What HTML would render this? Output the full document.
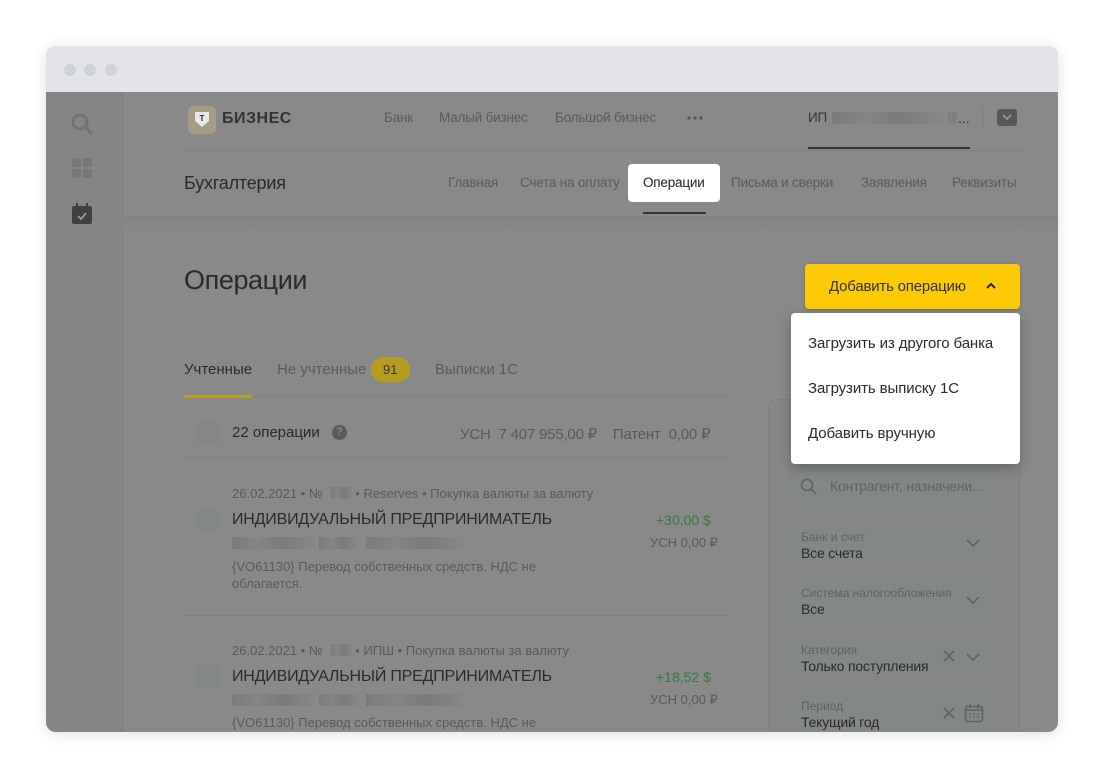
<!DOCTYPE html><html><head><meta charset="utf-8"><style>
*{box-sizing:border-box;margin:0;padding:0}
body{width:1104px;height:779px;background:#fff;font-family:"Liberation Sans",sans-serif;position:relative;overflow:hidden;color:#2e2e2e}
.a{position:absolute;white-space:nowrap}
.win{position:absolute;left:46px;top:46px;width:1012px;height:686px;border-radius:10px;overflow:hidden;box-shadow:0 2px 14px rgba(0,0,0,.12);background:#898989}
.bar{position:absolute;left:0;top:0;width:1012px;height:46px;background:#e2e4e8}
.dot{position:absolute;top:18px;width:12px;height:12px;border-radius:6px;background:#cfd2d8}
.g{color:#5a5a5a}
.n{font-size:13.5px;letter-spacing:-.2px}
.pix{position:absolute;height:12px;background:linear-gradient(90deg,#7b7b7b,#858585 30%,#7a7a7a 60%,#888)}
.fld{position:absolute;left:742px;width:210px;height:45px;border-radius:5px;background:#838787}
.lb{position:absolute;left:13px;top:8px;font-size:12px;color:#5f6262}
.vl{position:absolute;left:13px;top:23px;font-size:14px;color:#2a2a2a;letter-spacing:-.2px}
.chk{position:absolute;width:24px;height:24px;border-radius:4px;background:#838787}
</style></head><body>
<div class="win">
<div class="bar"><div class="dot" style="left:18px"></div><div class="dot" style="left:38px"></div><div class="dot" style="left:59px"></div></div>
<div class="a" style="left:0;top:46px;width:77px;height:640px;background:#858585;border-right:1px solid #808080"></div>
<svg class="a" style="left:24px;top:66px" width="24" height="24" viewBox="0 0 24 24"><circle cx="10" cy="10" r="7" fill="none" stroke="#727272" stroke-width="3"/><path d="M15 15l6 6" stroke="#727272" stroke-width="3.5" stroke-linecap="round"/></svg>
<svg class="a" style="left:26px;top:112px" width="20" height="20"><rect x="0" y="0" width="9" height="9" rx="2" fill="#777"/><rect x="11" y="0" width="9" height="9" rx="2" fill="#777"/><rect x="0" y="11" width="9" height="9" rx="2" fill="#777"/><rect x="11" y="11" width="9" height="9" rx="2" fill="#777"/></svg>
<svg class="a" style="left:26px;top:157px" width="20" height="22"><rect x="0" y="3" width="20" height="18" rx="2" fill="#404040"/><rect x="4" y="0" width="2" height="5" fill="#404040"/><rect x="14" y="0" width="2" height="5" fill="#404040"/><path d="M6 13l3 3 5-6" stroke="#999" stroke-width="1.8" fill="none"/></svg>
<div class="a" style="left:142px;top:60px;width:28px;height:28px;border-radius:5px;background:#a59b86"></div>
<svg class="a" style="left:149px;top:66px" width="14" height="16"><path d="M0 0h14v9l-7 6-7-6z" fill="#e8e8e8"/><text x="7" y="9" font-size="8" font-weight="bold" text-anchor="middle" fill="#222" font-family="Liberation Sans">T</text></svg>
<div class="a" style="left:176px;top:64px;font-size:16px;font-weight:bold;color:#333;letter-spacing:.5px">БИЗНЕС</div>
<div class="a g n" style="left:338px;top:64px">Банк</div>
<div class="a g n" style="left:393px;top:64px">Малый бизнес</div>
<div class="a g n" style="left:509px;top:64px">Большой бизнес</div>
<svg class="a" style="left:640px;top:69px" width="18" height="6"><circle cx="3" cy="3" r="1.6" fill="#555"/><circle cx="9" cy="3" r="1.6" fill="#555"/><circle cx="15" cy="3" r="1.6" fill="#555"/></svg>
<div class="a n" style="left:762px;top:64px;color:#333">ИП</div>
<div class="pix" style="left:786px;top:66px;width:112px"></div><div class="pix" style="left:902px;top:66px;width:10px"></div>
<div class="a" style="left:912px;top:64px;font-size:14px;color:#333">...</div>
<div class="a" style="left:762px;top:101px;width:162px;height:2px;background:#333"></div>
<div class="a" style="left:936px;top:60px;width:1px;height:24px;background:#7d7d7d"></div>
<div class="a" style="left:951px;top:63px;width:20px;height:17px;border-radius:3px;background:#585858"></div>
<svg class="a" style="left:955px;top:66px" width="12" height="10"><path d="M2 3l4 4 4-4" stroke="#999" stroke-width="1.6" fill="none"/></svg>
<div class="a" style="left:138px;top:104px;width:838px;height:1px;background:#808080"></div>
<div class="a" style="left:138px;top:127px;font-size:18px;color:#2a2a2a;letter-spacing:-.2px">Бухгалтерия</div>
<div class="a g n" style="left:402px;top:129px">Главная</div>
<div class="a g n" style="left:474px;top:129px">Счета на оплату</div>
<div class="a" style="left:582px;top:118px;width:92px;height:38px;border-radius:4px;background:#fff"></div>
<div class="a n" style="left:597px;top:129px;color:#222">Операции</div>
<div class="a" style="left:597px;top:166px;width:63px;height:2px;background:#333"></div>
<div class="a g n" style="left:685px;top:129px">Письма и сверки</div>
<div class="a g n" style="left:815px;top:129px">Заявления</div>
<div class="a g n" style="left:906px;top:129px">Реквизиты</div>
<div class="a" style="left:78px;top:170px;width:934px;height:14px;background:linear-gradient(#828282,#898989)"></div>
<div class="a" style="left:138px;top:219px;font-size:27px;color:#2a2a2a;letter-spacing:-.4px">Операции</div>
<div class="a" style="left:759px;top:218px;width:215px;height:45px;border-radius:4px;background:#fdcb06;box-shadow:0 1px 3px rgba(0,0,0,.2)"></div>
<div class="a" style="left:783px;top:232px;font-size:15px;color:#333;letter-spacing:-.2px">Добавить операцию</div>
<svg class="a" style="left:939px;top:235px" width="12" height="10"><path d="M2 7l4-4 4 4" stroke="#222" stroke-width="2" fill="none"/></svg>
<div class="a" style="left:138px;top:315px;font-size:15px;color:#2a2a2a">Учтенные</div>
<div class="a g" style="left:231px;top:315px;font-size:15px">Не учтенные</div>
<div class="a" style="left:325px;top:311px;width:39px;height:25px;border-radius:12px;background:#b89c20"></div>
<div class="a" style="left:337px;top:316px;font-size:13px;color:#333">91</div>
<div class="a g" style="left:389px;top:315px;font-size:15px">Выписки 1С</div>
<div class="a" style="left:138px;top:350px;width:544px;height:1px;background:#808080"></div>
<div class="a" style="left:138px;top:349px;width:68px;height:3px;background:#b89c20"></div>
<div class="chk" style="left:150px;top:375px"></div>
<div class="a" style="left:186px;top:378px;font-size:15px;color:#2a2a2a">22 операции</div>
<div class="a" style="left:286px;top:379px;width:15px;height:15px;border-radius:8px;background:#5a5a5a;color:#888;font-size:11px;font-weight:bold;text-align:center;line-height:15px">?</div>
<div class="a g" style="left:414px;top:379px;font-size:15px;letter-spacing:-.2px">УСН&nbsp; 7 407 955,00 ₽&nbsp;&nbsp;&nbsp; Патент&nbsp; 0,00 ₽</div>
<div class="a" style="left:138px;top:411px;width:544px;height:1px;background:#808080"></div>
<div class="a g" style="left:186px;top:440px;font-size:13px">26.02.2021 • №&nbsp;&nbsp;&nbsp;&nbsp;&nbsp;&nbsp;&nbsp;&nbsp; • Reserves • Покупка валюты за валюту</div>
<div class="pix" style="left:285px;top:441px;width:22px"></div>
<div class="chk" style="left:150px;top:462px"></div>
<div class="a" style="left:186px;top:465px;font-size:16px;color:#2a2a2a;letter-spacing:-.2px">ИНДИВИДУАЛЬНЫЙ ПРЕДПРИНИМАТЕЛЬ</div>
<div class="a" style="left:610px;top:466px;font-size:14px;color:#367a3e">+30,00 $</div>
<div class="a g" style="left:604px;top:489px;font-size:13px">УСН 0,00 ₽</div>
<div class="pix" style="left:186px;top:491px;width:84px"></div><div class="pix" style="left:273px;top:491px;width:40px"></div><div class="pix" style="left:320px;top:491px;width:100px"></div>
<div class="a g" style="left:186px;top:512px;font-size:13px;line-height:17px;white-space:normal;width:330px">{VO61130} Перевод собственных средств. НДС не облагается.</div>
<div class="a" style="left:138px;top:569px;width:544px;height:1px;background:#808080"></div>
<div class="a g" style="left:186px;top:597px;font-size:13px">26.02.2021 • №&nbsp;&nbsp;&nbsp;&nbsp;&nbsp;&nbsp;&nbsp;&nbsp; • ИПШ • Покупка валюты за валюту</div>
<div class="pix" style="left:285px;top:598px;width:22px"></div>
<div class="chk" style="left:150px;top:619px"></div>
<div class="a" style="left:186px;top:622px;font-size:16px;color:#2a2a2a;letter-spacing:-.2px">ИНДИВИДУАЛЬНЫЙ ПРЕДПРИНИМАТЕЛЬ</div>
<div class="a" style="left:610px;top:623px;font-size:14px;color:#367a3e">+18,52 $</div>
<div class="a g" style="left:604px;top:646px;font-size:13px">УСН 0,00 ₽</div>
<div class="pix" style="left:186px;top:648px;width:84px"></div><div class="pix" style="left:273px;top:648px;width:40px"></div><div class="pix" style="left:320px;top:648px;width:100px"></div>
<div class="a g" style="left:186px;top:669px;font-size:13px">{VO61130} Перевод собственных средств. НДС не</div>
<div class="a" style="left:722px;top:353px;width:252px;height:340px;border:1px solid #808080;border-radius:8px;background:#878787"></div>
<div class="fld" style="left:742px;top:418px"></div>
<svg class="a" style="left:754px;top:432px" width="18" height="18"><circle cx="7" cy="7" r="5.5" fill="none" stroke="#5f6262" stroke-width="1.6"/><path d="M11 11l5 5" stroke="#5f6262" stroke-width="1.6"/></svg>
<div class="a" style="left:784px;top:432px;font-size:14px;color:#5f6262;letter-spacing:-.2px">Контрагент, назначени...</div>
<div class="fld" style="top:476px"><div class="lb">Банк и счет</div><div class="vl">Все счета</div></div>
<div class="fld" style="top:532px"><div class="lb">Система налогообложения</div><div class="vl">Все</div></div>
<div class="fld" style="top:589px"><div class="lb">Категория</div><div class="vl">Только поступления</div></div>
<div class="fld" style="top:645px"><div class="lb">Период</div><div class="vl">Текущий год</div></div>
<svg class="a" style="left:920px;top:492px" width="14" height="10"><path d="M1 2l6 6 6-6" stroke="#5f6262" stroke-width="1.6" fill="none"/></svg>
<svg class="a" style="left:920px;top:549px" width="14" height="10"><path d="M1 2l6 6 6-6" stroke="#5f6262" stroke-width="1.6" fill="none"/></svg>
<svg class="a" style="left:920px;top:606px" width="14" height="10"><path d="M1 2l6 6 6-6" stroke="#5f6262" stroke-width="1.6" fill="none"/></svg>
<svg class="a" style="left:897px;top:604px" width="12" height="12"><path d="M1 1l10 10M11 1L1 11" stroke="#5f6262" stroke-width="1.6"/></svg>
<svg class="a" style="left:897px;top:661px" width="12" height="12"><path d="M1 1l10 10M11 1L1 11" stroke="#5f6262" stroke-width="1.6"/></svg>
<svg class="a" style="left:918px;top:657px" width="20" height="20"><rect x="1.5" y="3.5" width="17" height="15" rx="2" fill="none" stroke="#5f6262" stroke-width="1.6"/><path d="M2 7h16M6 1v4M14 1v4" stroke="#5f6262" stroke-width="1.6"/><path d="M5 11h2M9 11h2M13 11h2M5 14h2M9 14h2M13 14h2" stroke="#5f6262" stroke-width="1.3"/></svg>
<div class="a" style="left:745px;top:267px;width:229px;height:151px;background:#fff;border-radius:4px;box-shadow:0 4px 12px rgba(0,0,0,.25)"></div>
<div class="a" style="left:762px;top:289px;font-size:15px;color:#2a2a2a;letter-spacing:-.1px">Загрузить из другого банка</div>
<div class="a" style="left:762px;top:334px;font-size:15px;color:#2a2a2a;letter-spacing:-.1px">Загрузить выписку 1С</div>
<div class="a" style="left:762px;top:379px;font-size:15px;color:#2a2a2a;letter-spacing:-.1px">Добавить вручную</div>
</div>
</body></html>
